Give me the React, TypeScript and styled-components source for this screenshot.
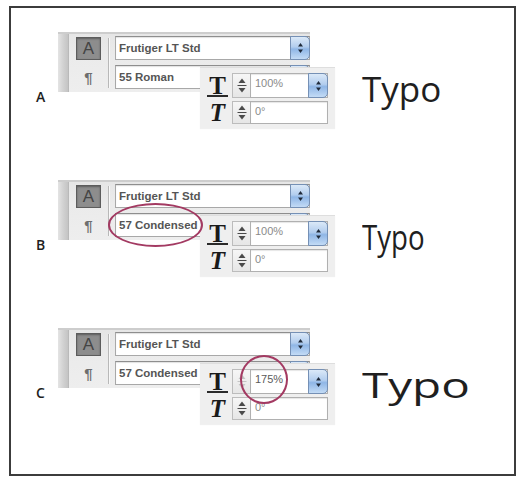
import styled, { createGlobalStyle } from "styled-components"

const GlobalStyle = createGlobalStyle`
    html, body {
        margin: 0;
        padding: 0;
        background: #ffffff;
    }
    body {
        font-family: "Liberation Sans", Arial, sans-serif;
    }
`

type Example = {
    label: string
    fontStyle: string
    scale: string
    typoScale: number
    mark?: "ellipse" | "circle"
}

const examples: Example[] = [
    { label: "A", fontStyle: "55 Roman", scale: "100%", typoScale: 1 },
    { label: "B", fontStyle: "57 Condensed", scale: "100%", typoScale: 0.79, mark: "ellipse" },
    { label: "C", fontStyle: "57 Condensed", scale: "175%", typoScale: 1.36, mark: "circle" },
]

const SelectArrows = () => (
    <svg width="7" height="12" viewBox="0 0 7 12">
        <path d="M3.5 1 L6 4.5 L1 4.5 Z" fill="#1f2a3a" />
        <path d="M3.5 11 L6 7.5 L1 7.5 Z" fill="#1f2a3a" />
    </svg>
)

const StepperArrows = ({ faded }: { faded?: boolean }) => (
    <svg width="10" height="17" viewBox="0 0 10 17">
        <g fill={faded ? "#c4c4c4" : "#4a4a4a"} stroke="none">
            <path d="M5 1.5 L8.5 6 L1.5 6 Z" />
            <rect x="0.5" y="8" width="9" height="1" />
            <path d="M5 15.5 L8.5 11 L1.5 11 Z" />
        </g>
    </svg>
)

export default function App() {
    return (
        <>
            <GlobalStyle />
            <Frame>
                {examples.map((ex) => (
                    <Row key={ex.label}>
                        <Label>{ex.label}</Label>
                        <Figure>
                            <MainPanel>
                                <Stripe />
                                <ToolColumn>
                                    <CharButton>A</CharButton>
                                    <Pilcrow>¶</Pilcrow>
                                </ToolColumn>
                                <Separator />
                                <FieldColumn>
                                    <Field>
                                        <FieldText>Frutiger LT Std</FieldText>
                                        <SelectButton><SelectArrows /></SelectButton>
                                    </Field>
                                    <Field>
                                        <FieldText>{ex.fontStyle}</FieldText>
                                        <SelectButton><SelectArrows /></SelectButton>
                                    </Field>
                                </FieldColumn>
                            </MainPanel>
                            <Overlay>
                                <ScaleIcon>T</ScaleIcon>
                                <Stepper><StepperArrows faded={ex.mark === "circle"} /></Stepper>
                                <ValueField>
                                    <ValueText dark={ex.mark === "circle"}>{ex.scale}</ValueText>
                                    <SelectButton><SelectArrows /></SelectButton>
                                </ValueField>
                                <SkewIcon>T</SkewIcon>
                                <Stepper><StepperArrows /></Stepper>
                                <ValueField>
                                    <ValueText>0°</ValueText>
                                </ValueField>
                            </Overlay>
                            {ex.mark === "ellipse" && <Ellipse />}
                            {ex.mark === "circle" && <Circle />}
                        </Figure>
                        <Typo style={{ transform: `scaleX(${ex.typoScale})` }}>Typo</Typo>
                    </Row>
                ))}
            </Frame>
        </>
    )
}

const Frame = styled.div`
    box-sizing: border-box;
    margin: 6px 0 0 9px;
    width: 507px;
    height: 470px;
    border: 2px solid #3c3c3c;
    padding-top: 24px;
    display: flex;
    flex-direction: column;
    gap: 52px;
`

const Row = styled.div`
    display: flex;
    align-items: flex-start;
    padding-left: 25px;
    height: 96px;
`

const Label = styled.div`
    width: 22px;
    margin-top: 58px;
    font-family: "Open Sans", sans-serif;
    font-weight: 600;
    font-size: 14px;
    line-height: 14px;
    color: #1e1e1e;
`

const Figure = styled.div`
    position: relative;
    width: 277px;
    height: 96px;
    flex-shrink: 0;
`

const MainPanel = styled.div`
    box-sizing: border-box;
    width: 252px;
    height: 60px;
    display: flex;
    background: linear-gradient(#e6e6e6, #ebebeb 40%, #eeeeee);
    border-top: 2px solid #cdcdcd;
`

const Stripe = styled.div`
    width: 10px;
    background: linear-gradient(to right, #e4e4e4, #d2d2d2 50%, #c4c4c4);
    border-right: 1px solid #b9b9b9;
`

const ToolColumn = styled.div`
    width: 39px;
    padding-top: 3px;
    display: flex;
    flex-direction: column;
    align-items: center;
    gap: 5px;
`

const CharButton = styled.div`
    box-sizing: border-box;
    width: 25px;
    height: 23px;
    display: flex;
    align-items: center;
    justify-content: center;
    background: #8d8d8d;
    border: 1px solid #5c5c5c;
    box-shadow: inset 0 1px 2px rgba(0, 0, 0, 0.35);
    font-size: 17px;
    color: #444444;
`

const Pilcrow = styled.div`
    height: 24px;
    display: flex;
    align-items: center;
    font-size: 15px;
    font-weight: bold;
    color: #6e6e6e;
`

const Separator = styled.div`
    width: 1px;
    margin: 4px 0 4px;
    background: #b8b8b8;
    border-right: 1px solid #f8f8f8;
`

const FieldColumn = styled.div`
    flex: 1;
    margin-left: 5px;
    padding-top: 2px;
    display: flex;
    flex-direction: column;
    gap: 5px;
`

const Field = styled.div`
    box-sizing: border-box;
    height: 24px;
    display: flex;
    align-items: stretch;
    background: #ffffff;
    border: 1px solid #a8a8a8;
    border-top-color: #8e8e8e;
    box-shadow: inset 0 1px 1px rgba(0, 0, 0, 0.12);
`

const FieldText = styled.span`
    flex: 1;
    padding-left: 3px;
    display: flex;
    align-items: center;
    font-size: 11.5px;
    font-weight: bold;
    color: #555555;
`

const SelectButton = styled.div`
    box-sizing: border-box;
    width: 20px;
    margin: -1px -1px -1px 0;
    display: flex;
    align-items: center;
    justify-content: center;
    background: linear-gradient(#dbe9f8, #b2cdee 45%, #8fb6e6 55%, #c3dbf5);
    border: 1px solid #7590b5;
    border-radius: 0 5px 5px 0;
`

const Overlay = styled.div`
    box-sizing: border-box;
    position: absolute;
    left: 142px;
    top: 35px;
    width: 135px;
    height: 61px;
    padding: 5px 7px 5px 3px;
    display: grid;
    grid-template-columns: 29px 18px 78px;
    grid-template-rows: 25px 23px;
    row-gap: 3px;
    background: #efefef;
    border-top: 1px solid #dedede;
    box-shadow: 0 1px 1px rgba(0, 0, 0, 0.06);
`

const ScaleIcon = styled.div`
    align-self: end;
    justify-self: center;
    margin-bottom: 1px;
    padding: 0 2px;
    font-family: "Liberation Serif", serif;
    font-weight: bold;
    font-size: 25px;
    line-height: 19px;
    color: #1a1a1a;
    border-bottom: 2px solid #2a2a2a;
`

const SkewIcon = styled.div`
    align-self: center;
    justify-self: center;
    font-family: "Liberation Serif", serif;
    font-weight: bold;
    font-style: italic;
    font-size: 25px;
    line-height: 20px;
    color: #1a1a1a;
`

const Stepper = styled.div`
    box-sizing: border-box;
    display: flex;
    align-items: center;
    justify-content: center;
    background: linear-gradient(#f6f6f6, #e6e6e6);
    border: 1px solid #bcbcbc;
    border-right: none;
`

const ValueField = styled.div`
    box-sizing: border-box;
    display: flex;
    align-items: stretch;
    background: #ffffff;
    border: 1px solid #b0b0b0;
    box-shadow: inset 0 1px 1px rgba(0, 0, 0, 0.1);
`

const ValueText = styled.span<{ dark?: boolean }>`
    flex: 1;
    padding: 3px 0 0 4px;
    font-size: 11px;
    color: ${props => props.dark ? "#5a5a5a" : "#8a8a8a"};
`

const Ellipse = styled.div`
    position: absolute;
    left: 50px;
    top: 23px;
    width: 95px;
    height: 44px;
    box-sizing: border-box;
    border: 2.5px solid #a33a62;
    border-radius: 50%;
`

const Circle = styled.div`
    position: absolute;
    left: 182px;
    top: 27px;
    width: 48px;
    height: 49px;
    box-sizing: border-box;
    border: 2.5px solid #a33a62;
    border-radius: 50%;
`

const Typo = styled.div`
    margin: 39px 0 0 27px;
    font-family: "Open Sans", sans-serif;
    font-size: 35px;
    line-height: 1;
    color: #1f1f1f;
    transform-origin: left center;
    white-space: nowrap;
`
